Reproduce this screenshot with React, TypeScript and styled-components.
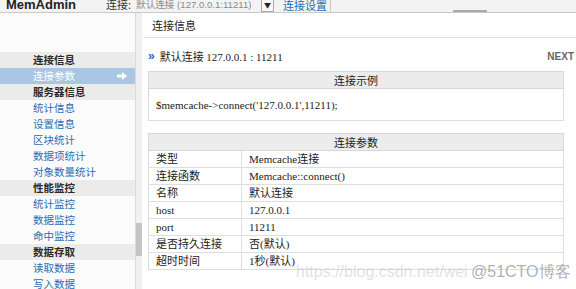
import styled, { createGlobalStyle } from 'styled-components';

const GlobalStyle = createGlobalStyle`
  html, body {
    margin: 0;
    padding: 0;
    background: #ffffff;
  }
  body {
    width: 576px;
    height: 289px;
    overflow: hidden;
    font-family: "Noto Sans CJK SC", "Liberation Sans", sans-serif;
  }
`;

const Page = styled.div`
  position: relative;
  width: 576px;
  height: 289px;
  overflow: hidden;
  display: flex;
  flex-direction: column;
`;

const TopBar = styled.div`
  position: relative;
  height: 12px;
  flex-shrink: 0;
  display: flex;
  align-items: flex-end;
  background: #f3f3f3;
  border-bottom: 1px solid #c9c9c9;
  overflow: hidden;
`;

const Brand = styled.div`
  width: 100px;
  padding-left: 6px;
  font-family: "Liberation Sans", sans-serif;
  font-weight: bold;
  font-size: 13px;
  line-height: 13px;
  color: #222;
  margin-bottom: 1px;
`;

const ConnLabel = styled.span`
  font-size: 11px;
  line-height: 13px;
  color: #333;
  margin-bottom: 1px;
`;

const ConnValue = styled.span`
  width: 124px;
  margin-left: 5px;
  font-family: "Liberation Sans", "Noto Sans CJK SC", sans-serif;
  font-size: 9.6px;
  line-height: 13px;
  color: #8a8a8a;
  margin-bottom: 1px;
  white-space: nowrap;
  overflow: hidden;
`;

const DropButton = styled.span`
  width: 11px;
  height: 11px;
  margin-left: 1px;
  border: 1px solid #aaa;
  background: #f8f8f8;
  font-size: 7px;
  line-height: 11px;
  text-align: center;
  color: #222;
`;

const SetupLink = styled.span`
  margin-left: 9px;
  padding-right: 3px;
  border-right: 1px solid #c6c6c6;
  font-size: 11px;
  line-height: 13px;
  color: #1f6eb5;
`;

const FrameThumb = styled.div`
  position: absolute;
  left: 453px;
  bottom: -2px;
  width: 34px;
  height: 4px;
  background: #a9a9a9;
`;

const Body = styled.div`
  flex: 1;
  display: flex;
  min-height: 0;
`;

const Sidebar = styled.div`
  width: 135px;
  flex-shrink: 0;
  background: #fbfbfb;
  border-right: 1px solid #dcdcdc;
  padding-top: 39px;
  display: flex;
  flex-direction: column;
`;

const SideRow = styled.div<{ $kind: 'head' | 'link' | 'active' }>`
  height: 16px;
  display: flex;
  align-items: center;
  justify-content: space-between;
  padding-left: 33px;
  padding-right: 8px;
  font-size: 10.5px;
  line-height: 16px;
  white-space: nowrap;
  background: ${p =>
    p.$kind === 'head' ? '#ebebeb' : p.$kind === 'active' ? '#a9c6e3' : 'transparent'};
  color: ${p => (p.$kind === 'head' ? '#2b2b2b' : p.$kind === 'active' ? '#ffffff' : '#2a6db2')};
  font-weight: ${p => (p.$kind === 'head' ? 'bold' : 'normal')};
`;

const ScrollTrack = styled.div`
  width: 6px;
  flex-shrink: 0;
  background: #f1f1f1;
  padding-top: 210px;
`;

const ScrollThumb = styled.div`
  height: 33px;
  background: #c4c4c4;
`;

const Main = styled.div`
  flex: 1;
  padding-left: 1px;
  display: flex;
  flex-direction: column;
`;

const MainTitle = styled.div`
  height: 24px;
  padding-left: 9px;
  display: flex;
  align-items: center;
  font-size: 11px;
  color: #222;
  border-bottom: 1px solid #e2e2e2;
`;

const Content = styled.div`
  padding: 9px 2px 0 5px;
  display: flex;
  flex-direction: column;
`;

const InfoLine = styled.div`
  height: 18px;
  display: flex;
  align-items: center;
  justify-content: space-between;
  margin-bottom: 6px;
`;

const InfoText = styled.div`
  display: flex;
  align-items: center;
  gap: 5px;
  font-size: 11px;
  color: #222;
`;

const Raquo = styled.span`
  color: #1e67b5;
  font-weight: bold;
  font-family: "Liberation Sans", sans-serif;
  font-size: 12px;
`;

const Num = styled.span`
  font-family: "Liberation Serif", serif;
  font-size: 11px;
`;

const Next = styled.span`
  font-family: "Liberation Sans", sans-serif;
  font-weight: bold;
  font-size: 10px;
  color: #666;
`;

const Table = styled.table<{ $gap?: number }>`
  width: 416px;
  border-collapse: collapse;
  border: 1px solid #d8d8d8;
  margin-bottom: ${p => p.$gap ?? 0}px;
  font-size: 11px;
  line-height: 12px;
  color: #222;
`;

const HeadCell = styled.th`
  height: 16px;
  padding: 0;
  background: #ececec;
  border-bottom: 1px solid #d8d8d8;
  font-weight: normal;
  text-align: center;
  font-size: 11px;
  line-height: 12px;
`;

const Cell = styled.td<{ $h?: number; $w?: number }>`
  height: ${p => p.$h ?? 16}px;
  width: ${p => (p.$w ? `${p.$w}px` : 'auto')};
  padding: 0 0 0 7px;
  border-bottom: 1px solid #dedede;
  border-right: 1px solid #dedede;
  font-family: "Liberation Serif", "Noto Sans CJK SC", serif;
  font-size: 11px;
  line-height: 12px;
  white-space: nowrap;
`;

const Watermark = styled.div`
  position: absolute;
  left: 296px;
  top: 262px;
  display: flex;
  align-items: baseline;
  font-family: "Liberation Sans", sans-serif;
  font-size: 16px;
  white-space: nowrap;
`;

const WmUrl = styled.span`
  color: rgba(190, 190, 190, 0.45);
  width: 175px;
  overflow: hidden;
`;

const WmTag = styled.span`
  color: rgba(150, 150, 150, 0.75);
  font-size: 16px;
`;

const Arrow = () => (
  <svg width="10" height="8" viewBox="0 0 10 8">
    <path d="M0 2.5h5V0l5 4-5 4V5.5H0z" fill="#ffffff" />
  </svg>
);

const menu: { label: string; kind: 'head' | 'link' | 'active' }[] = [
  { label: '连接信息', kind: 'head' },
  { label: '连接参数', kind: 'active' },
  { label: '服务器信息', kind: 'head' },
  { label: '统计信息', kind: 'link' },
  { label: '设置信息', kind: 'link' },
  { label: '区块统计', kind: 'link' },
  { label: '数据项统计', kind: 'link' },
  { label: '对象数量统计', kind: 'link' },
  { label: '性能监控', kind: 'head' },
  { label: '统计监控', kind: 'link' },
  { label: '数据监控', kind: 'link' },
  { label: '命中监控', kind: 'link' },
  { label: '数据存取', kind: 'head' },
  { label: '读取数据', kind: 'link' },
  { label: '写入数据', kind: 'link' },
];

const params: [string, string][] = [
  ['类型', 'Memcache连接'],
  ['连接函数', 'Memcache::connect()'],
  ['名称', '默认连接'],
  ['host', '127.0.0.1'],
  ['port', '11211'],
  ['是否持久连接', '否(默认)'],
  ['超时时间', '1秒(默认)'],
];

export default function App() {
  return (
    <Page>
      <GlobalStyle />
      <TopBar>
        <Brand>MemAdmin</Brand>
        <ConnLabel>连接:</ConnLabel>
        <ConnValue>默认连接 (127.0.0.1:11211)</ConnValue>
        <DropButton>▼</DropButton>
        <SetupLink>连接设置</SetupLink>
        <FrameThumb />
      </TopBar>
      <Body>
        <Sidebar>
          {menu.map(m => (
            <SideRow key={m.label} $kind={m.kind}>
              {m.label}
              {m.kind === 'active' && <Arrow />}
            </SideRow>
          ))}
        </Sidebar>
        <ScrollTrack>
          <ScrollThumb />
        </ScrollTrack>
        <Main>
          <MainTitle>连接信息</MainTitle>
          <Content>
            <InfoLine>
              <InfoText>
                <Raquo>»</Raquo>
                <span>
                  默认连接 <Num>127.0.0.1 : 11211</Num>
                </span>
              </InfoText>
              <Next>NEXT</Next>
            </InfoLine>
            <Table $gap={12}>
              <thead>
                <tr>
                  <HeadCell>连接示例</HeadCell>
                </tr>
              </thead>
              <tbody>
                <tr>
                  <Cell $h={31}>$memcache-&gt;connect('127.0.0.1',11211);</Cell>
                </tr>
              </tbody>
            </Table>
            <Table>
              <thead>
                <tr>
                  <HeadCell colSpan={2}>连接参数</HeadCell>
                </tr>
              </thead>
              <tbody>
                {params.map(([k, v]) => (
                  <tr key={k}>
                    <Cell $w={85}>{k}</Cell>
                    <Cell>{v}</Cell>
                  </tr>
                ))}
              </tbody>
            </Table>
          </Content>
        </Main>
      </Body>
      <Watermark>
        <WmUrl>https://blog.csdn.net/wei</WmUrl>
        <WmTag>@51CTO博客</WmTag>
      </Watermark>
    </Page>
  );
}
